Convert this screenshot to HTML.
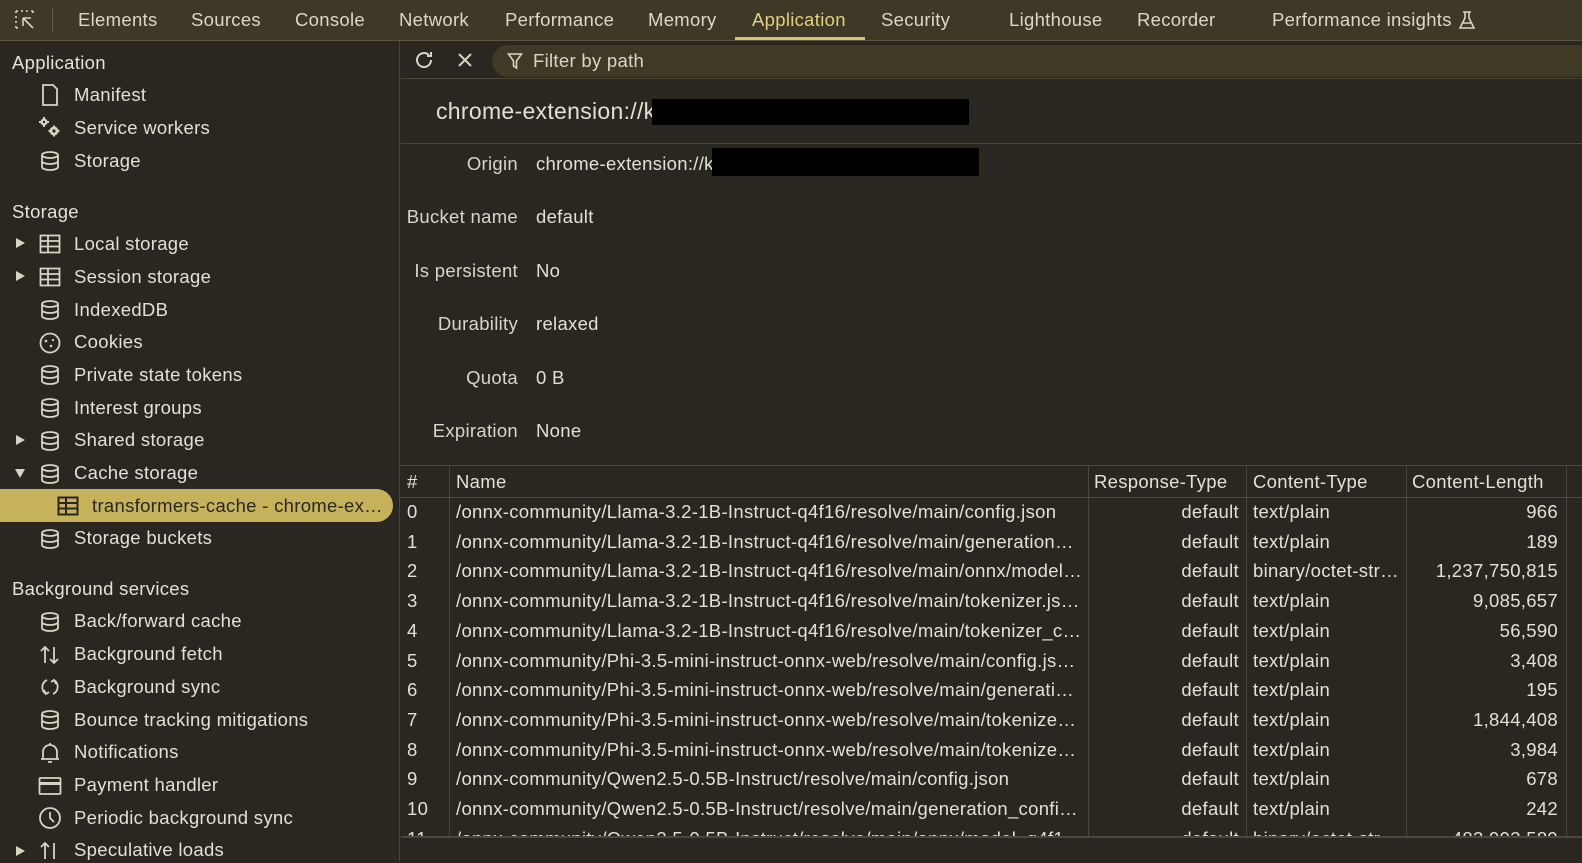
<!DOCTYPE html>
<html><head><meta charset="utf-8"><style>
*{margin:0;padding:0;box-sizing:border-box}
body{width:1582px;height:861px;background:#2a2620;color:#e4e0d3;font-family:"Liberation Sans",sans-serif;font-size:18.5px;letter-spacing:0.3px;position:relative;overflow:hidden}
.a{position:absolute;white-space:nowrap}
#tabs{position:absolute;left:0;top:0;width:1582px;height:41px;background:#3e3826;border-bottom:1px solid #5a5440}
.tab{position:absolute;top:9px;font-size:18.5px;color:#ddd8c6}
#side{position:absolute;left:0;top:41px;width:400px;height:820px;border-right:1px solid #4a4535}
.h{position:absolute;left:12px;font-size:18.5px;color:#e6e2d5}
.it{position:absolute;left:74px;font-size:18.5px}
.ic{position:absolute;left:38px;width:24px;height:24px}
.tri{position:absolute;left:16px;width:0;height:0;border-top:5px solid transparent;border-bottom:5px solid transparent;border-left:9px solid #d8d3c3}
.trd{position:absolute;left:15px;width:0;height:0;border-left:5px solid transparent;border-right:5px solid transparent;border-top:9px solid #d8d3c3}
.lbl{position:absolute;right:1064px;text-align:right;font-size:18.5px;color:#d9d5c7}
.val{position:absolute;left:536px;font-size:18.5px}
.row{position:absolute;left:401px;width:1165px;height:29.7px}
.c{position:absolute;top:4px;white-space:nowrap;overflow:hidden;text-overflow:ellipsis;font-size:18.5px}
.vl{position:absolute;top:465px;width:1px;height:372px;background:#4c4738}
</style></head><body>
<svg width="0" height="0" style="position:absolute">
<symbol id="db" viewBox="0 0 24 24"><g fill="none" stroke="#d8d3c3" stroke-width="1.8"><ellipse cx="12" cy="6" rx="8" ry="3"/><path d="M4 6v12c0 1.7 3.6 3 8 3s8-1.3 8-3V6M4 12c0 1.7 3.6 3 8 3s8-1.3 8-3"/></g></symbol>
<symbol id="tb" viewBox="0 0 24 24"><g fill="none" stroke="#d8d3c3" stroke-width="1.8"><rect x="2.5" y="3.5" width="19" height="17"/><path d="M2.5 9h19M2.5 14.5h19M10 3.5v17"/></g></symbol>
</svg>
<div id="tabs">
<svg class="a" style="left:13px;top:8px" width="24" height="24" viewBox="0 0 24 24"><g fill="none" stroke="#d8d3c3" stroke-width="1.6"><path d="M3 3h2M8 3h2M13 3h2M18 3h2M3 3v2M3 8v2M3 13v2M3 18v2M20 3v2M3 20h2"/><path d="M10 10h8M10 10v8M10 10l10 10"/></g></svg>
<div class="a" style="left:52px;top:8px;width:1px;height:24px;background:#5e5845"></div>
<div class="tab" style="left:78px">Elements</div>
<div class="tab" style="left:191px">Sources</div>
<div class="tab" style="left:295px">Console</div>
<div class="tab" style="left:399px">Network</div>
<div class="tab" style="left:505px">Performance</div>
<div class="tab" style="left:648px">Memory</div>
<div class="tab" style="left:752px;color:#e0cf7c">Application</div>
<div class="a" style="left:735px;top:37px;width:130px;height:3px;background:#d7c571"></div>
<div class="tab" style="left:881px">Security</div>
<div class="tab" style="left:1009px">Lighthouse</div>
<div class="tab" style="left:1137px">Recorder</div>
<div class="tab" style="left:1272px">Performance insights</div>
<svg class="a" style="left:1458px;top:10px" width="18" height="20" viewBox="0 0 18 20"><path d="M5 2h8M7 2v6L2 18h14L11 8V2M4.5 13h9" fill="none" stroke="#d8d3c3" stroke-width="1.6"/></svg>
</div>
<div id="side">
<div class="h" style="top:11px">Application</div>
<svg class="ic" style="top:42px" viewBox="0 0 24 24"><path d="M5 2h10l4 4v16H5z" fill="none" stroke="#d8d3c3" stroke-width="1.8"/></svg><div class="it" style="top:43px">Manifest</div>
<svg class="ic" style="top:75px" viewBox="0 0 24 24"><g fill="#d8d3c3"><circle cx="6" cy="6" r="3.5"/><circle cx="16" cy="15" r="4.5"/><rect x="5" y="1" width="2" height="10"/><rect x="1" y="5" width="10" height="2"/><rect x="15" y="9.5" width="2" height="11"/><rect x="10.5" y="14" width="11" height="2"/></g><g fill="#2a2620"><circle cx="6" cy="6" r="1.2"/><circle cx="16" cy="15" r="1.6"/></g></svg><div class="it" style="top:76px">Service workers</div>
<svg class="ic" style="top:108px"><use href="#db"/></svg><div class="it" style="top:109px">Storage</div>
<div class="h" style="top:160px">Storage</div>
<div class="tri" style="top:197px"></div><svg class="ic" style="top:191px"><use href="#tb"/></svg><div class="it" style="top:192px">Local storage</div>
<div class="tri" style="top:230px"></div><svg class="ic" style="top:224px"><use href="#tb"/></svg><div class="it" style="top:225px">Session storage</div>
<svg class="ic" style="top:257px"><use href="#db"/></svg><div class="it" style="top:258px">IndexedDB</div>
<svg class="ic" style="top:290px" viewBox="0 0 24 24"><circle cx="12" cy="12" r="9.5" fill="none" stroke="#d8d3c3" stroke-width="1.8"/><g fill="#d8d3c3"><circle cx="8" cy="10" r="1.3"/><circle cx="13" cy="15" r="1.3"/><circle cx="15" cy="9" r="1.1"/></g></svg><div class="it" style="top:290px">Cookies</div>
<svg class="ic" style="top:322px"><use href="#db"/></svg><div class="it" style="top:323px">Private state tokens</div>
<svg class="ic" style="top:355px"><use href="#db"/></svg><div class="it" style="top:356px">Interest groups</div>
<div class="tri" style="top:394px"></div><svg class="ic" style="top:388px"><use href="#db"/></svg><div class="it" style="top:388px">Shared storage</div>
<div class="trd" style="top:428px"></div><svg class="ic" style="top:421px"><use href="#db"/></svg><div class="it" style="top:421px">Cache storage</div>
<div class="a" style="left:0;top:448px;width:393px;height:33px;background:#c7b25c;border-radius:0 17px 17px 0"></div>
<svg class="a" style="left:56px;top:453px" width="24" height="24" viewBox="0 0 24 24"><g fill="none" stroke="#2a2620" stroke-width="2"><rect x="2.5" y="3.5" width="19" height="17"/><path d="M2.5 9h19M2.5 14.5h19M10 3.5v17"/></g></svg>
<div class="a" style="left:92px;top:454px;font-size:18.5px;color:#2a2620">transformers-cache - chrome-ex…</div>
<svg class="ic" style="top:486px"><use href="#db"/></svg><div class="it" style="top:486px">Storage buckets</div>
<div class="h" style="top:537px">Background services</div>
<svg class="ic" style="top:569px"><use href="#db"/></svg><div class="it" style="top:569px">Back/forward cache</div>
<svg class="ic" style="top:602px" viewBox="0 0 24 24"><path d="M7 20V4M3 8l4-4 4 4M16 4v16M12 16l4 4 4-4" fill="none" stroke="#d8d3c3" stroke-width="1.8"/></svg><div class="it" style="top:602px">Background fetch</div>
<svg class="ic" style="top:634px" viewBox="0 0 24 24"><path d="M9 5a8 8 0 0 0-1 14M6 15l2 4 3-2M15 19a8 8 0 0 0 1-14M18 9l-2-4-3 2" fill="none" stroke="#d8d3c3" stroke-width="1.8"/></svg><div class="it" style="top:635px">Background sync</div>
<svg class="ic" style="top:667px"><use href="#db"/></svg><div class="it" style="top:668px">Bounce tracking mitigations</div>
<svg class="ic" style="top:700px" viewBox="0 0 24 24"><path d="M5 18V11a7 7 0 0 1 14 0v7zM3 18h18M12 2v2M10 21h4" fill="none" stroke="#d8d3c3" stroke-width="1.8"/></svg><div class="it" style="top:700px">Notifications</div>
<svg class="ic" style="top:733px" viewBox="0 0 24 24"><rect x="1.5" y="4" width="21" height="16" rx="1" fill="none" stroke="#d8d3c3" stroke-width="1.8"/><path d="M1.5 9.5h21" stroke="#d8d3c3" stroke-width="3"/></svg><div class="it" style="top:733px">Payment handler</div>
<svg class="ic" style="top:765px" viewBox="0 0 24 24"><circle cx="12" cy="12" r="10" fill="none" stroke="#d8d3c3" stroke-width="1.8"/><path d="M12 6v6l4 4" fill="none" stroke="#d8d3c3" stroke-width="1.8"/></svg><div class="it" style="top:766px">Periodic background sync</div>
<div class="tri" style="top:805px"></div><svg class="ic" style="top:798px" viewBox="0 0 24 24"><path d="M7 20V4M3 8l4-4 4 4M16 4v16" fill="none" stroke="#d8d3c3" stroke-width="1.8"/></svg><div class="it" style="top:798px">Speculative loads</div>
</div>
<div class="a" style="left:401px;top:41px;width:1181px;height:38px;border-bottom:1px solid #4a4535"></div>
<svg class="a" style="left:412px;top:48px" width="24" height="24" viewBox="0 0 24 24"><path d="M19 12a7 7 0 1 1-2.2-5.1M19 4v4h-4" fill="none" stroke="#d8d3c3" stroke-width="2"/></svg>
<svg class="a" style="left:456px;top:51px" width="18" height="18" viewBox="0 0 18 18"><path d="M3 3l12 12M15 3L3 15" stroke="#d8d3c3" stroke-width="2"/></svg>
<div class="a" style="left:492px;top:45px;width:1100px;height:32px;background:#403a25;border-radius:16px"></div>
<svg class="a" style="left:507px;top:52px" width="16" height="18" viewBox="0 0 16 18"><path d="M1.5 2h13L9.5 9v7l-3-2V9z" fill="none" stroke="#d8d3c3" stroke-width="1.6"/></svg>
<div class="a" style="left:533px;top:50px;font-size:18.5px;color:#d9d5c7">Filter by path</div>
<div class="a" style="left:436px;top:98px;font-size:23px">chrome-extension://k</div>
<div class="a" style="left:652px;top:99px;width:317px;height:26px;background:#000"></div>
<div class="a" style="left:401px;top:143px;width:1181px;height:1px;background:#4a4535"></div>
<div class="lbl" style="top:153px">Origin</div><div class="val" style="top:153px">chrome-extension://k</div>
<div class="a" style="left:712px;top:148px;width:267px;height:28px;background:#000"></div>
<div class="lbl" style="top:206px">Bucket name</div><div class="val" style="top:206px">default</div>
<div class="lbl" style="top:260px">Is persistent</div><div class="val" style="top:260px">No</div>
<div class="lbl" style="top:313px">Durability</div><div class="val" style="top:313px">relaxed</div>
<div class="lbl" style="top:367px">Quota</div><div class="val" style="top:367px">0 B</div>
<div class="lbl" style="top:420px">Expiration</div><div class="val" style="top:420px">None</div>
<div class="a" style="left:401px;top:465px;width:1181px;height:1px;background:#4c4738"></div>
<div class="a" style="left:401px;top:497px;width:1181px;height:1px;background:#4c4738"></div>
<div class="vl" style="left:449px"></div><div class="vl" style="left:1088px"></div><div class="vl" style="left:1246px"></div><div class="vl" style="left:1406px"></div><div class="vl" style="left:1566px"></div>
<div class="row" style="top:467px"><div class="c" style="left:6px">#</div><div class="c" style="left:55px">Name</div><div class="c" style="left:693px">Response-Type</div><div class="c" style="left:852px">Content-Type</div><div class="c" style="left:1011px">Content-Length</div></div>
<div id="rows"></div>
<script>
var d=[["0","/onnx-community/Llama-3.2-1B-Instruct-q4f16/resolve/main/config.json","text/plain","966"],
["1","/onnx-community/Llama-3.2-1B-Instruct-q4f16/resolve/main/generation…","text/plain","189"],
["2","/onnx-community/Llama-3.2-1B-Instruct-q4f16/resolve/main/onnx/model…","binary/octet-str…","1,237,750,815"],
["3","/onnx-community/Llama-3.2-1B-Instruct-q4f16/resolve/main/tokenizer.js…","text/plain","9,085,657"],
["4","/onnx-community/Llama-3.2-1B-Instruct-q4f16/resolve/main/tokenizer_c…","text/plain","56,590"],
["5","/onnx-community/Phi-3.5-mini-instruct-onnx-web/resolve/main/config.js…","text/plain","3,408"],
["6","/onnx-community/Phi-3.5-mini-instruct-onnx-web/resolve/main/generati…","text/plain","195"],
["7","/onnx-community/Phi-3.5-mini-instruct-onnx-web/resolve/main/tokenize…","text/plain","1,844,408"],
["8","/onnx-community/Phi-3.5-mini-instruct-onnx-web/resolve/main/tokenize…","text/plain","3,984"],
["9","/onnx-community/Qwen2.5-0.5B-Instruct/resolve/main/config.json","text/plain","678"],
["10","/onnx-community/Qwen2.5-0.5B-Instruct/resolve/main/generation_confi…","text/plain","242"],
["11","/onnx-community/Qwen2.5-0.5B-Instruct/resolve/main/onnx/model_q4f1…","binary/octet-str…","483,993,589"]];
var h="";d.forEach(function(r,i){h+='<div class="row" style="top:'+(497+i*29.7)+'px"><div class="c" style="left:6px">'+r[0]+'</div><div class="c" style="left:55px;width:630px">'+r[1]+'</div><div class="c" style="left:687px;width:151px;text-align:right">default</div><div class="c" style="left:852px;width:150px">'+r[2]+'</div><div class="c" style="left:1011px;width:146px;text-align:right">'+r[3]+'</div></div>';});
document.getElementById("rows").innerHTML=h;
</script>
<div class="a" style="left:401px;top:836px;width:1181px;height:2px;background:#4c4738"></div>
<div class="a" style="left:401px;top:838px;width:1181px;height:23px;background:#2a2620"></div>
</body></html>
